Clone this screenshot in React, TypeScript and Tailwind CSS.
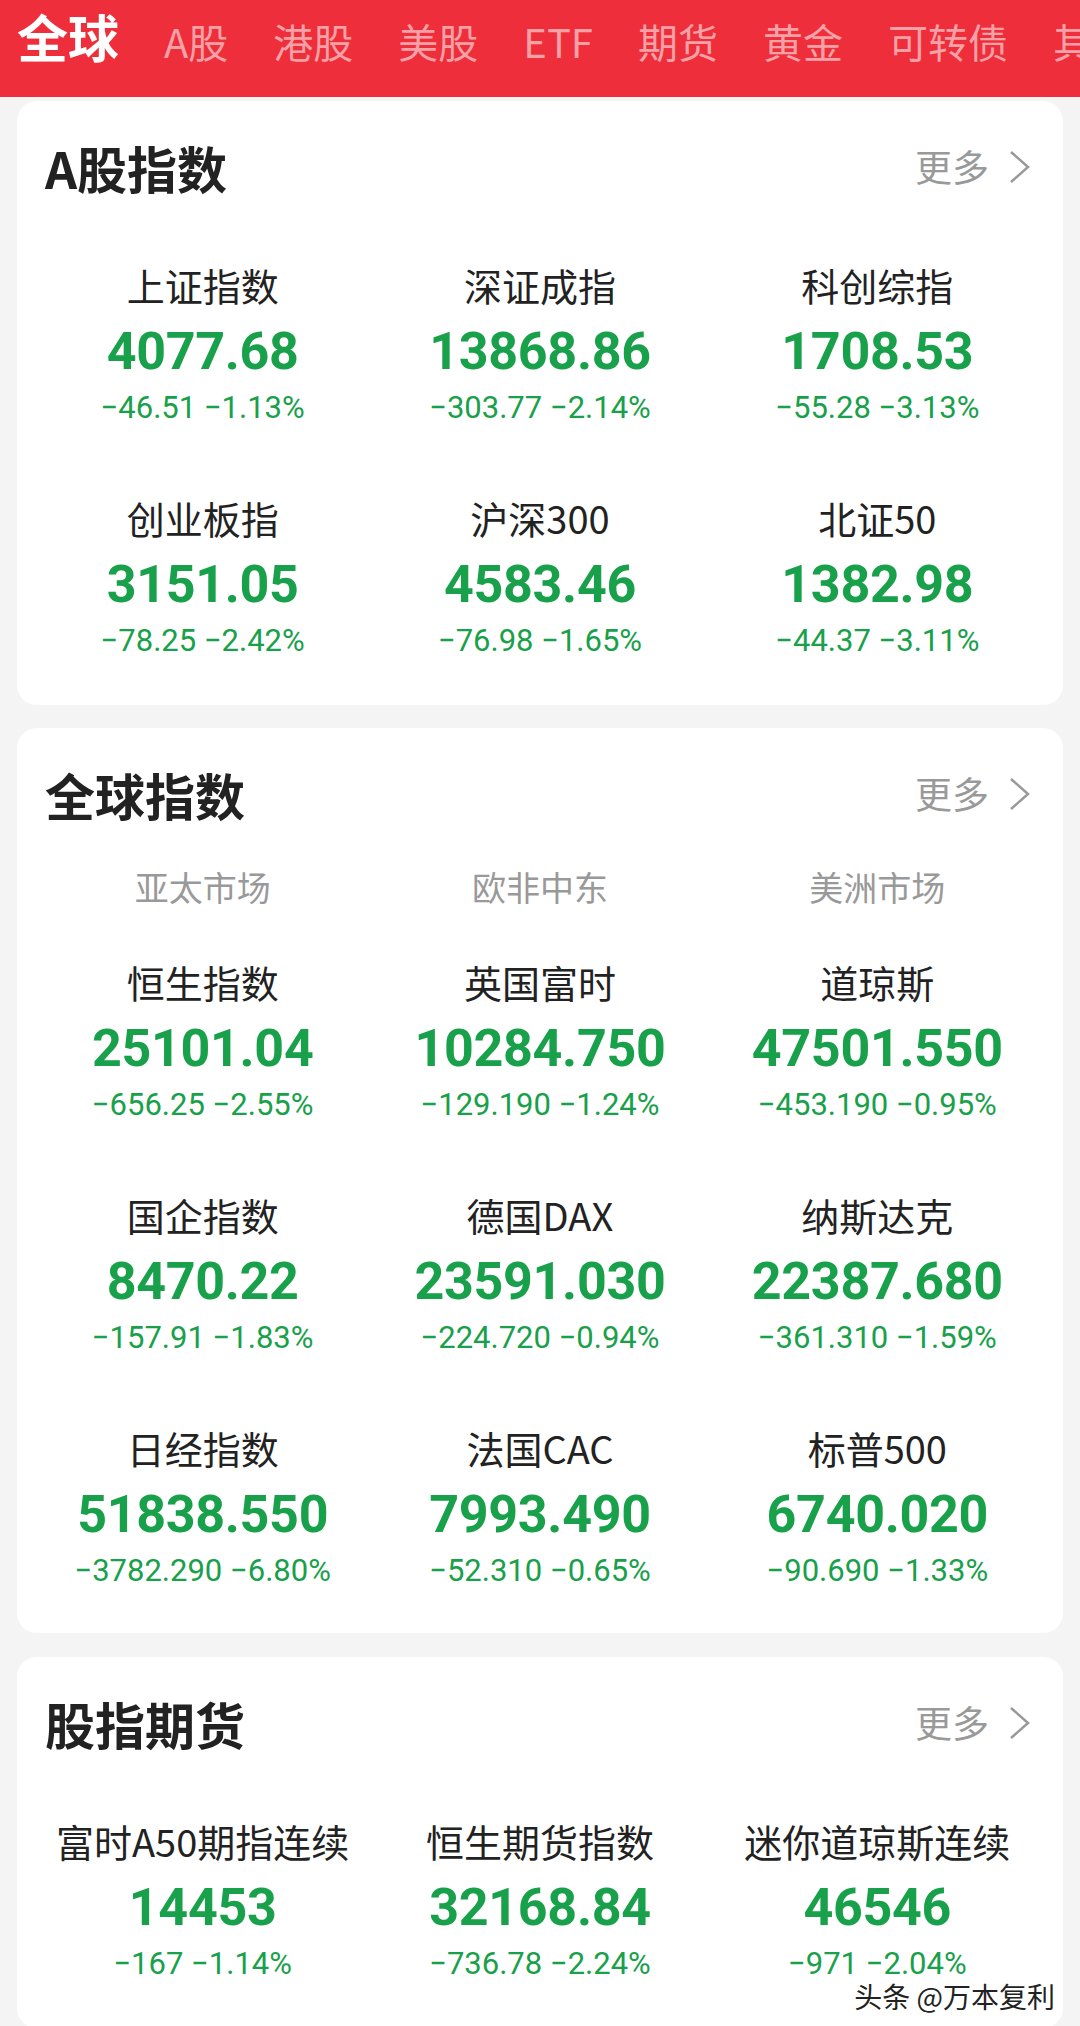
import React from 'react';

type Quote = { name: string; value: string; change: string; pct: string };

const aShares: Quote[] = [
  { name: '上证指数', value: '4077.68', change: '−46.51', pct: '−1.13%' },
  { name: '深证成指', value: '13868.86', change: '−303.77', pct: '−2.14%' },
  { name: '科创综指', value: '1708.53', change: '−55.28', pct: '−3.13%' },
  { name: '创业板指', value: '3151.05', change: '−78.25', pct: '−2.42%' },
  { name: '沪深300', value: '4583.46', change: '−76.98', pct: '−1.65%' },
  { name: '北证50', value: '1382.98', change: '−44.37', pct: '−3.11%' },
];

const globalIdx: Quote[] = [
  { name: '恒生指数', value: '25101.04', change: '−656.25', pct: '−2.55%' },
  { name: '英国富时', value: '10284.750', change: '−129.190', pct: '−1.24%' },
  { name: '道琼斯', value: '47501.550', change: '−453.190', pct: '−0.95%' },
  { name: '国企指数', value: '8470.22', change: '−157.91', pct: '−1.83%' },
  { name: '德国DAX', value: '23591.030', change: '−224.720', pct: '−0.94%' },
  { name: '纳斯达克', value: '22387.680', change: '−361.310', pct: '−1.59%' },
  { name: '日经指数', value: '51838.550', change: '−3782.290', pct: '−6.80%' },
  { name: '法国CAC', value: '7993.490', change: '−52.310', pct: '−0.65%' },
  { name: '标普500', value: '6740.020', change: '−90.690', pct: '−1.33%' },
];

const futures: Quote[] = [
  { name: '富时A50期指连续', value: '14453', change: '−167', pct: '−1.14%' },
  { name: '恒生期货指数', value: '32168.84', change: '−736.78', pct: '−2.24%' },
  { name: '迷你道琼斯连续', value: '46546', change: '−971', pct: '−2.04%' },
];

const tabs = ['A股', '港股', '美股', 'ETF', '期货', '黄金', '可转债', '其他'];

const cjk = "font-['Noto_Sans_CJK_SC',sans-serif]";
const num = "font-['Roboto','Noto_Sans_CJK_SC',sans-serif]";

const QuoteCell = ({ q }: { q: Quote }) => (
  <div className="flex flex-col items-center whitespace-nowrap">
    <div className={`${cjk} text-[38px] leading-[56px] text-[#222]`}>{q.name}</div>
    <div className={`${num} text-[52px] leading-[78px] font-bold tracking-[-0.3px] text-[#18a04a]`}>{q.value}</div>
    <div className={`${num} text-[31px] leading-[34px] text-[#18a04a]`}>
      {q.change} {q.pct}
    </div>
  </div>
);

const CardHeader = ({ title }: { title: string }) => (
  <div className="flex h-[64px] items-center justify-between pl-[11px] pr-[15px]">
    <h2 className={`${cjk} text-[50px] font-bold text-[#222]`}>{title}</h2>
    <div className="flex items-center gap-[18px]">
      <span className={`${cjk} text-[37px] text-[#999]`}>更多</span>
      <svg width="24" height="34" viewBox="0 0 24 34" fill="none">
        <polyline points="4,2 21,17 4,32" stroke="#999" strokeWidth="2.5" strokeLinejoin="miter" />
      </svg>
    </div>
  </div>
);

export default function App() {
  return (
    <div className="min-h-screen w-[1080px] overflow-hidden bg-[#f4f4f4]">
      {/* top tabs */}
      <div className="h-[97px] bg-[#ee2e3b]">
        <div className="flex items-baseline gap-[45px] whitespace-nowrap pl-[17px] pt-[6px]">
          <span className={`${cjk} text-[51px] leading-[60px] font-bold text-white`}>全球</span>
          {tabs.map((t) => (
            <span key={t} className={`${cjk} text-[40px] leading-[60px] text-[#f7a1a7]`}>
              {t}
            </span>
          ))}
        </div>
      </div>

      <div className="flex flex-col gap-[23px] px-[17px] pt-[4px]">
        <section className="rounded-[20px] bg-white px-[17px] pt-[34px] pb-[47px]">
          <CardHeader title="A股指数" />
          <div className="mt-[58px] grid grid-cols-3 gap-y-[65px]">
            {aShares.map((q) => (
              <QuoteCell key={q.name} q={q} />
            ))}
          </div>
        </section>

        <section className="rounded-[20px] bg-white px-[17px] pt-[34px] pb-[45px]">
          <CardHeader title="全球指数" />
          <div className={`${cjk} mt-[39px] grid grid-cols-3 text-center text-[34px] leading-[44px] text-[#999]`}>
            <span>亚太市场</span>
            <span>欧非中东</span>
            <span>美洲市场</span>
          </div>
          <div className="mt-[45px] grid grid-cols-3 gap-y-[65px]">
            {globalIdx.map((q) => (
              <QuoteCell key={q.name} q={q} />
            ))}
          </div>
        </section>

        <section className="relative mt-[1px] rounded-[20px] bg-white px-[17px] pt-[34px] pb-[47px]">
          <CardHeader title="股指期货" />
          <div className="mt-[58px] grid grid-cols-3 gap-y-[65px]">
            {futures.map((q) => (
              <QuoteCell key={q.name} q={q} />
            ))}
          </div>
          <div
            className={`${cjk} absolute top-[322px] right-[8px] text-[28px] leading-[34px] text-[#222] [text-shadow:0_0_2px_#fff,0_0_2px_#fff]`}
          >
            头条 @万本复利
          </div>
        </section>
      </div>
    </div>
  );
}
